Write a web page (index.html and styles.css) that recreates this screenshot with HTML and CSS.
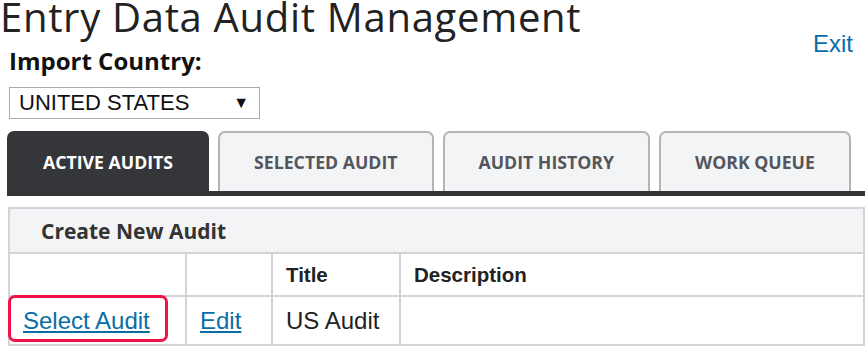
FILE: index.html
```html
<!DOCTYPE html>
<html lang="en">
<head>
    <meta charset="UTF-8">
    <meta name="viewport" content="width=device-width, initial-scale=1.0">
    <title>Entry Data Audit Management</title>
    <link rel="stylesheet" href="styles.css">
</head>
<body>
    <div class="page">
        <div class="header">
            <h1>Entry Data Audit Management</h1>
            <a class="exit" href="#">Exit</a>
        </div>
        <label class="country-label" for="country">Import Country:</label>
        <div class="select-box" id="country">
            <span>UNITED STATES</span>
            <span class="arrow">&#9660;</span>
        </div>
        <div class="tabs">
            <div class="tab active">ACTIVE AUDITS</div>
            <div class="tab">SELECTED AUDIT</div>
            <div class="tab">AUDIT HISTORY</div>
            <div class="tab">WORK QUEUE</div>
        </div>
        <table class="audits">
            <tr class="caption-row">
                <td colspan="4">Create New Audit</td>
            </tr>
            <tr class="head-row">
                <th class="col-select"></th>
                <th class="col-edit"></th>
                <th class="col-title">Title</th>
                <th>Description</th>
            </tr>
            <tr class="data-row">
                <td class="select-cell">
                    <span class="highlight"></span>
                    <a href="#">Select Audit</a>
                </td>
                <td><a href="#">Edit</a></td>
                <td>US Audit</td>
                <td></td>
            </tr>
        </table>
    </div>
</body>
</html>
```

FILE: styles.css
```css
body, html {
    margin: 0;
    padding: 0;
    background-color: #fff;
    color: #222;
    font-family: "Liberation Sans", Arial, sans-serif;
    overflow: hidden;
}
.page {
    padding: 0 3px 0 7px;
}
.header {
    display: flex;
    justify-content: space-between;
    align-items: flex-start;
    height: 34px;
}
h1 {
    margin: 0 0 0 -7px;
    font-family: "Open Sans", sans-serif;
    font-weight: 400;
    font-size: 40px;
    line-height: 34px;
    color: #222;
    letter-spacing: 0.7px;
}
.exit {
    margin: 32px 12px 0 0;
    font-size: 24px;
    line-height: 24px;
    color: #0a6ea6;
    text-decoration: none;
}
.country-label {
    display: block;
    margin: 13px 0 0 2px;
    font-family: "Open Sans", sans-serif;
    font-weight: 700;
    font-size: 24px;
    line-height: 28px;
    color: #111;
}
.select-box {
    display: flex;
    justify-content: space-between;
    align-items: center;
    box-sizing: border-box;
    width: 251px;
    height: 32px;
    margin: 12px 0 0 2px;
    padding: 0 10px 0 9px;
    border: 1px solid #aaa;
    font-size: 22px;
    color: #111;
}
.arrow {
    font-size: 16px;
}
.tabs {
    display: flex;
    gap: 9px;
    margin-top: 12px;
    border-bottom: 5px solid #35363a;
}
.tab {
    box-sizing: border-box;
    flex-shrink: 0;
    height: 60px;
    padding: 0 34px;
    display: flex;
    align-items: center;
    justify-content: center;
    white-space: nowrap;
    background-color: #f3f4f6;
    border: 2px solid #b4b4b7;
    border-bottom: none;
    border-radius: 7px 7px 0 0;
    font-family: "Open Sans", sans-serif;
    font-weight: 700;
    font-size: 17.7px;
    color: #54565c;
}
.tab.active {
    background-color: #35363a;
    border-color: #35363a;
    color: #fff;
}
.audits {
    width: calc(100% - 1px);
    margin: 11px 0 0 1px;
    border-collapse: collapse;
    border: 2px solid #d4d4d8;
}
.audits td, .audits th {
    border: 2px solid #d4d4d8;
    padding: 0 13px;
    text-align: left;
}
.caption-row td {
    height: 43px;
    background-color: #f3f4f6;
    padding-left: 31px;
    font-family: "Open Sans", sans-serif;
    font-weight: 700;
    font-size: 21px;
    color: #333;
}
.head-row th {
    height: 41px;
    font-size: 20.5px;
    color: #222;
}
.col-select { width: 149px; }
.col-edit { width: 58px; }
.col-title { width: 100px; }
.data-row td {
    height: 47px;
    font-size: 24px;
}
.audits a {
    color: #0a6ea6;
}
.select-cell {
    position: relative;
}
.highlight {
    position: absolute;
    left: -2px;
    top: -2px;
    width: 154px;
    height: 41px;
    border: 3px solid #ef1247;
    border-radius: 7px;
}
```
